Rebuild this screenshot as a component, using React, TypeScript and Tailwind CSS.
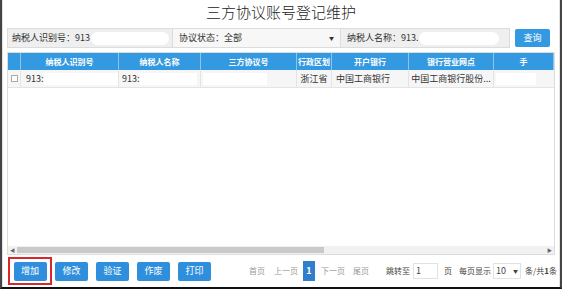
import React from "react"

const font = { fontFamily: '"Microsoft YaHei", "Noto Sans CJK SC", sans-serif' }

const cols = [
  { w: "w-[13px]", label: "" },
  { w: "w-[98px]", label: "纳税人识别号" },
  { w: "w-[82px]", label: "纳税人名称" },
  { w: "w-[96px]", label: "三方协议号" },
  { w: "w-[35px]", label: "行政区划" },
  { w: "w-[77px]", label: "开户银行" },
  { w: "w-[85px]", label: "银行营业网点" },
  { w: "w-[60px]", label: "手" },
]

function ActionButton({ label }: { label: string }) {
  return (
    <button className="h-[19px] w-[33px] shrink-0 rounded-[2px] bg-[#2f8fdc] text-[9px] text-white">
      {label}
    </button>
  )
}

export default function App() {
  return (
    <div
      className="h-[289px] w-[562px] overflow-hidden border-x-2 border-b-2 border-x-[#444] border-b-[#111] bg-white text-[#333]"
      style={font}
    >
      <div className="flex h-full flex-col border-x border-[#e2e2e2] px-[4px]">
        <h1 className="h-[26px] text-center text-[15px] leading-[24px] font-light text-[#222]">
          三方协议账号登记维护
        </h1>

        <div className="flex h-[24px] items-center">
          <div className="flex h-[20px] w-[503px] items-center border border-[#dcdcdc] bg-[#efefef] text-[9px] whitespace-nowrap">
            <div className="flex h-full w-[165px] items-center border-r border-[#dcdcdc] pl-[4px]">
              <span>纳税人识别号：913</span>
              <span className="ml-[1px] h-[13px] w-[78px] rounded-full bg-white" />
            </div>
            <div className="flex h-full w-[168px] items-center justify-between border-r border-[#dcdcdc] bg-[#f7f7f7] pl-[6px] pr-[6px]">
              <span>协议状态：全部</span>
              <span className="text-[5px]">▼</span>
            </div>
            <div className="flex h-full flex-1 items-center pl-[6px]">
              <span>纳税人名称：913.</span>
              <span className="h-[13px] w-[80px] rounded-full bg-white" />
            </div>
          </div>
          <button className="ml-[5px] h-[18px] w-[35px] rounded-[2px] bg-[#3399e0] text-[9px] text-white">
            查询
          </button>
        </div>

        <div className="mt-[2px] flex flex-1 flex-col border border-[#dcdcdc]">
          <div className="flex h-[17px] bg-[#3399e0] text-[8px] font-bold text-white">
            {cols.map((c, i) => (
              <div
                key={i}
                className={`${c.w} flex shrink-0 items-center justify-center overflow-hidden border-r border-[#8cc4ec] whitespace-nowrap`}
              >
                {c.label}
              </div>
            ))}
          </div>
          <div className="flex h-[18px] border-b border-[#e4e4e4] bg-[#f6f6f6] text-[9px] whitespace-nowrap">
            <div className="flex w-[13px] shrink-0 items-center justify-center border-r border-[#e4e4e4]">
              <span className="h-[7px] w-[7px] border border-[#aaa] bg-white" />
            </div>
            <div className="flex w-[98px] shrink-0 items-center border-r border-[#e4e4e4] pl-[5px]">
              <span>913:</span>
              <span className="h-[12px] flex-1 bg-white" />
            </div>
            <div className="flex w-[82px] shrink-0 items-center border-r border-[#e4e4e4] pl-[3px]">
              <span>913:</span>
              <span className="mr-[3px] h-[12px] flex-1 bg-white" />
            </div>
            <div className="flex w-[96px] shrink-0 items-center border-r border-[#e4e4e4] pl-[2px]">
              <span className="h-[12px] w-[64px] bg-white" />
            </div>
            <div className="flex w-[35px] shrink-0 items-center justify-center border-r border-[#e4e4e4]">
              浙江省
            </div>
            <div className="flex w-[77px] shrink-0 items-center border-r border-[#e4e4e4] pl-[4px]">
              中国工商银行
            </div>
            <div className="flex w-[85px] shrink-0 items-center justify-center overflow-hidden border-r border-[#e4e4e4]">
              中国工商银行股份...
            </div>
            <div className="flex w-[60px] shrink-0 items-center pl-[2px]">
              <span className="h-[12px] w-[40px] bg-white" />
            </div>
          </div>
          <div className="flex-1 bg-white" />
          <div className="flex h-[8px] items-center bg-[#f1f1f1] text-[5px] text-[#666]">
            <span className="w-[9px] text-center">◀</span>
            <span className="h-[6px] w-[307px] bg-[#c9c9c9]" />
            <span className="flex-1" />
            <span className="w-[9px] text-center">▶</span>
          </div>
        </div>

        <div className="flex h-[32px] items-center text-[9px] whitespace-nowrap">
          <div className="ml-[1px] flex h-[28px] w-[44px] shrink-0 items-center justify-center border-2 border-[#d9262c]">
            <ActionButton label="增加" />
          </div>
          <div className="ml-[3px] flex shrink-0 gap-[8px]">
            <ActionButton label="修改" />
            <ActionButton label="验证" />
            <ActionButton label="作废" />
            <ActionButton label="打印" />
          </div>
          <div className="ml-[38px] flex shrink-0 items-center text-[8px] text-[#999]">
            <span>首页</span>
            <span className="ml-[9px]">上一页</span>
            <span className="ml-[5px] flex h-[20px] w-[12px] items-center justify-center bg-[#2f7fcc] text-[9px] font-bold text-white">
              1
            </span>
            <span className="ml-[6px]">下一页</span>
            <span className="ml-[8px]">尾页</span>
            <span className="ml-[17px] text-[#444]">跳转至</span>
            <span className="ml-[3px] flex h-[16px] w-[25px] items-center border border-[#e2e2e2] bg-white pl-[2px] text-[9px] text-[#444]">
              1
            </span>
            <span className="ml-[6px] text-[#444]">页</span>
            <span className="ml-[7px] text-[#444]">每页显示</span>
            <span className="ml-[2px] flex h-[16px] w-[28px] items-center justify-between border border-[#e2e2e2] bg-white px-[2px] text-[9px] text-[#444]">
              10<span className="text-[5px]">▼</span>
            </span>
            <span className="ml-[4px] text-[#444]">
              条/共<b>1</b>条
            </span>
          </div>
        </div>
      </div>
    </div>
  )
}
